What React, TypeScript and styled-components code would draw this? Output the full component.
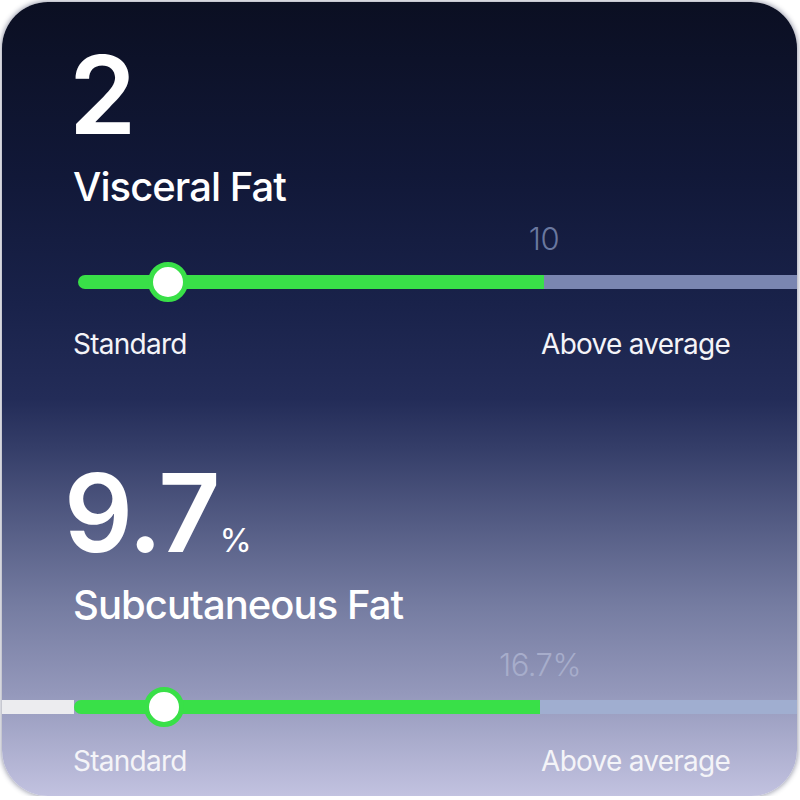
import styled, { createGlobalStyle } from 'styled-components';

const GlobalStyle = createGlobalStyle`
    html, body {
        margin: 0;
        padding: 0;
        background: #ffffff;
    }
    body {
        font-family: Inter, "Noto Sans", "Liberation Sans", sans-serif;
    }
`;

const KNOB_AT = 90;
const GREEN_LEN = 466;

const metrics = [
    {
        id: 'visceral',
        value: '2',
        unit: null,
        title: 'Visceral Fat',
        limit: '10',
        start: 76,
        lead: 'transparent',
        rest: '#7a86b1',
        limitColor: '#6a789f',
        valueLeft: 67,
        valueTop: 39,
        titleTop: 18,
        limitTop: 17,
        sliderTop: 8,
        labelsTop: 28,
    },
    {
        id: 'subcutaneous',
        value: '9.7',
        unit: '%',
        title: 'Subcutaneous Fat',
        limit: '16.7%',
        start: 72,
        lead: '#ececef',
        rest: '#a0aed0',
        limitColor: '#a7adcb',
        valueLeft: 62,
        valueTop: 101,
        titleTop: 18,
        limitTop: 25,
        sliderTop: 7,
        labelsTop: 20,
    },
];

function Slider({ m }) {
    return (
        <SliderRow>
            <Segment style={{ width: m.start }} $color={m.lead} />
            <Segment style={{ width: GREEN_LEN }} $color="#39e048" $roundLeft />
            <Segment $color={m.rest} $grow />
            <Knob style={{ left: m.start + KNOB_AT }} />
        </SliderRow>
    );
}

export default function App() {
    return (
        <>
            <GlobalStyle />
            <Card>
                {metrics.map(m => {
                    return (
                        <Section key={m.id}>
                            <BigValue $top={m.valueTop} $left={m.valueLeft}>
                                {m.value}
                                {m.unit ? <Unit>{m.unit}</Unit> : null}
                            </BigValue>
                            <Title $top={m.titleTop}>{m.title}</Title>
                            <LimitRow $top={m.limitTop}>
                                <Limit
                                    $color={m.limitColor}
                                    style={{ left: m.start + GREEN_LEN }}
                                >{m.limit}</Limit>
                            </LimitRow>
                            <SliderWrap $top={m.sliderTop}>
                                <Slider m={m} />
                            </SliderWrap>
                            <Labels $top={m.labelsTop}>
                                <span>Standard</span>
                                <span>Above average</span>
                            </Labels>
                        </Section>
                    );
                })}
            </Card>
        </>
    );
}

const Card = styled.div`
    box-sizing: border-box;
    width: 795px;
    height: 794px;
    margin: 2px 0 0 2px;
    border-radius: 46px;
    overflow: hidden;
    box-shadow: 0 0 5px 1px rgba(40, 44, 80, 0.45);
    background: linear-gradient(
        180deg,
        #0b0f22 0%,
        #111838 22%,
        #19224a 38%,
        #232c58 50%,
        #343d68 56%,
        #555d85 66%,
        #757ca1 76%,
        #9498bb 87%,
        #c2c2e0 100%
    );
    display: flex;
    flex-direction: column;
`;

const Section = styled.div`
    display: flex;
    flex-direction: column;
`;

const BigValue = styled.div`
    margin-top: ${p => p.$top}px;
    padding-left: ${p => p.$left}px;
    font-size: 108px;
    line-height: 108px;
    height: 108px;
    font-weight: 600;
    color: #ffffff;
    letter-spacing: -2px;
`;

const Unit = styled.span`
    font-size: 33px;
    font-weight: 400;
    margin-left: 1px;
    letter-spacing: 0;
`;

const Title = styled.div`
    margin-top: ${p => p.$top}px;
    padding-left: 71px;
    font-size: 40px;
    line-height: 40px;
    height: 40px;
    font-weight: 500;
    color: #ffffff;
    letter-spacing: -0.95px;
`;

const LimitRow = styled.div`
    position: relative;
    margin-top: ${p => p.$top}px;
    height: 30px;
`;

const Limit = styled.span`
    position: absolute;
    top: 0;
    transform: translateX(-50%);
    font-size: 31px;
    line-height: 30px;
    font-weight: 300;
    color: ${p => p.$color};
    letter-spacing: -0.5px;
`;

const SliderWrap = styled.div`
    margin-top: ${p => p.$top}px;
`;

const SliderRow = styled.div`
    position: relative;
    height: 40px;
    display: flex;
    align-items: center;
`;

const Segment = styled.div`
    height: 14px;
    flex: ${p => (p.$grow ? '1' : 'none')};
    background: ${p => p.$color};
    border-radius: ${p => (p.$roundLeft ? '7px 0 0 7px' : '0')};
`;

const Knob = styled.div`
    position: absolute;
    top: 0;
    width: 30px;
    height: 30px;
    margin-left: -20px;
    border-radius: 50%;
    background: #ffffff;
    border: 5px solid #39e048;
`;

const Labels = styled.div`
    margin-top: ${p => p.$top}px;
    padding: 0 67px 0 71px;
    display: flex;
    justify-content: space-between;
    font-size: 28px;
    line-height: 28px;
    height: 28px;
    font-weight: 400;
    color: #f4f4f8;
    letter-spacing: -0.75px;
`;
